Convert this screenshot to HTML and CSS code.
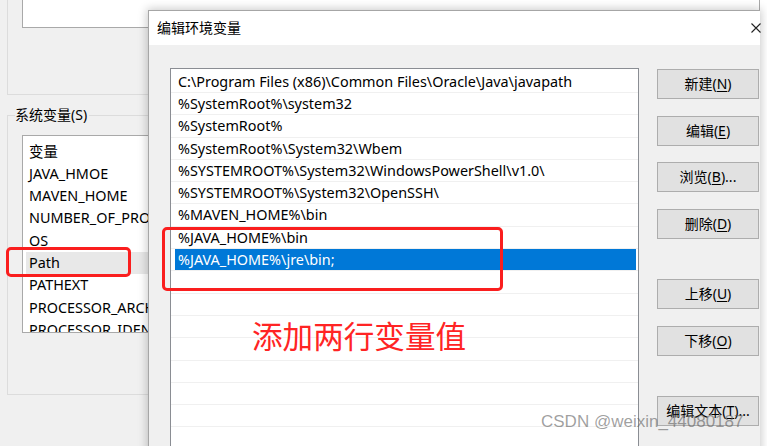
FILE: index.html
```html
<!DOCTYPE html>
<html lang="zh-CN">
<head>
<meta charset="utf-8">
<title>编辑环境变量</title>
<link rel="stylesheet" href="styles.css">
</head>
<body>
<div class="screen">
  <div class="bgwin">
    <div class="user-group"><div class="user-list"></div></div>
    <fieldset class="sys-group">
      <legend>系统变量(S)</legend>
      <div class="sys-list">
        <div class="sys-row">变量</div>
        <div class="sys-row">JAVA_HMOE</div>
        <div class="sys-row">MAVEN_HOME</div>
        <div class="sys-row">NUMBER_OF_PROCESSORS</div>
        <div class="sys-row">OS</div>
        <div class="sys-row hl">Path</div>
        <div class="sys-row">PATHEXT</div>
        <div class="sys-row">PROCESSOR_ARCHITECTURE</div>
        <div class="sys-row">PROCESSOR_IDENTIFIER</div>
      </div>
    </fieldset>
  </div>

  <div class="dialog">
    <div class="titlebar">
      <span class="title">编辑环境变量</span>
      <svg class="close" width="10" height="10" viewBox="0 0 10 10"><path d="M0.5 0.5 L9.5 9.5 M9.5 0.5 L0.5 9.5" stroke="#222" stroke-width="1.1" fill="none"/></svg>
    </div>
    <div class="dlg-body">
      <div class="path-list">
        <div class="prow"><div class="t">C:\Program Files (x86)\Common Files\Oracle\Java\javapath</div></div>
        <div class="prow"><div class="t">%SystemRoot%\system32</div></div>
        <div class="prow"><div class="t">%SystemRoot%</div></div>
        <div class="prow"><div class="t">%SystemRoot%\System32\Wbem</div></div>
        <div class="prow"><div class="t">%SYSTEMROOT%\System32\WindowsPowerShell\v1.0\</div></div>
        <div class="prow"><div class="t">%SYSTEMROOT%\System32\OpenSSH\</div></div>
        <div class="prow"><div class="t">%MAVEN_HOME%\bin</div></div>
        <div class="prow"><div class="t">%JAVA_HOME%\bin</div></div>
        <div class="prow sel"><div class="t">%JAVA_HOME%\jre\bin;</div></div>
        <div class="prow"><div class="t"></div></div>
        <div class="prow"><div class="t"></div></div>
        <div class="prow"><div class="t"></div></div>
        <div class="prow"><div class="t"></div></div>
        <div class="prow"><div class="t"></div></div>
        <div class="prow"><div class="t"></div></div>
        <div class="prow"><div class="t"></div></div>
        <div class="prow"><div class="t"></div></div>
      </div>
      <div class="btns">
        <div class="btn">新建(<u>N</u>)</div>
        <div class="btn">编辑(<u>E</u>)</div>
        <div class="btn">浏览(<u>B</u>)...</div>
        <div class="btn">删除(<u>D</u>)</div>
        <div class="btn far">上移(<u>U</u>)</div>
        <div class="btn">下移(<u>O</u>)</div>
        <div class="btn far">编辑文本(<u>T</u>)...</div>
      </div>
    </div>
  </div>

  <div class="mark mark-java"></div>
  <div class="mark mark-path"></div>
  <div class="note">添加两行变量值</div>
  <div class="wm">CSDN @weixin_44080187</div>
</div>
</body>
</html>
```

FILE: styles.css
```css
html, body {
  margin: 0;
  padding: 0;
  background: #ffffff;
}
body {
  font-family: "Noto Sans", "Noto Sans CJK SC", sans-serif;
  color: #000;
  overflow: hidden;
}
.screen {
  position: relative;
  width: 767px;
  height: 446px;
  overflow: hidden;
}
.bgwin {
  width: 760px;
  height: 446px;
  background: #f0f0f0;
  overflow: hidden;
}
.user-group {
  margin-left: 7px;
  height: 95px;
  box-sizing: border-box;
  border-left: 1px solid #dcdcdc;
  border-bottom: 1px solid #dcdcdc;
  padding-left: 14px;
}
.user-list {
  height: 28px;
  box-sizing: border-box;
  background: #fff;
  border: 1px solid #a9a9a9;
  border-top: none;
}
.sys-group {
  margin: 10px 0 0 7px;
  border: 1px solid #dcdcdc;
  border-right: none;
  padding: 10px 0 61px 14px;
  min-width: 0;
}
.sys-group legend {
  margin-left: -7px;
  padding: 0 2px 0 0;
  font-size: 14px;
  line-height: 20px;
  font-family: "Noto Sans", "Noto Sans CJK SC", sans-serif;
}
.sys-list {
  width: 400px;
  height: 198px;
  box-sizing: border-box;
  background: #fff;
  border: 1px solid #a9a9a9;
  padding-top: 4.5px;
  overflow: hidden;
}
.sys-row {
  height: 22.3px;
  line-height: 22.3px;
  padding-left: 6px;
  font-size: 14.4px;
  white-space: nowrap;
}
.sys-row.hl {
  margin-left: 3px;
  padding-left: 3px;
  background: #e8e8e8;
}

.dialog {
  position: absolute;
  left: 148px;
  top: 10px;
  width: 612px;
  height: 450px;
  box-sizing: border-box;
  background: #f0f0f0;
  border: 1px solid #a6a6a6;
  border-right: none;
  box-shadow: 0 0 9px 1px rgba(0, 0, 0, 0.22);
}
.titlebar {
  height: 34px;
  background: #fff;
  display: flex;
  align-items: center;
  justify-content: space-between;
  padding: 0 0 0 8px;
}
.title {
  font-size: 14px;
  line-height: 20px;
}
.close {
  display: block;
  margin-right: -1px;
}
.dlg-body {
  display: flex;
  align-items: flex-start;
  gap: 18px;
  padding: 23px 0 0 21px;
}
.path-list {
  width: 469px;
  height: 400px;
  flex: none;
  box-sizing: border-box;
  background: #fff;
  border: 1px solid #8a8d93;
  padding-top: 1.7px;
  overflow: hidden;
}
.prow {
  height: 22.3px;
  box-sizing: border-box;
  border-bottom: 1px solid #f0f0f0;
  padding: 0 2px 0 4px;
}
.prow .t {
  height: 100%;
  padding-left: 3px;
  font-size: 14.4px;
  line-height: 21.3px;
  white-space: nowrap;
}
.prow.sel .t {
  background: #0078d7;
  color: #fff;
}
.btns {
  display: flex;
  flex-direction: column;
  gap: 16.7px;
  padding-top: 1px;
}
.btn {
  width: 102px;
  height: 30px;
  box-sizing: border-box;
  background: #e1e1e1;
  border: 1px solid #adadad;
  font-size: 14px;
  line-height: 28px;
  text-align: center;
  white-space: nowrap;
}
.btn u {
  text-underline-offset: 2px;
}
.btn.far {
  margin-top: 23.3px;
}

.mark {
  position: absolute;
  box-sizing: border-box;
  border: 3px solid #fa1e1e;
  border-radius: 5px;
}
.mark-java {
  left: 162px;
  top: 227px;
  width: 341px;
  height: 64px;
}
.mark-path {
  left: 6px;
  top: 247px;
  width: 125px;
  height: 30px;
}
.note {
  position: absolute;
  left: 252px;
  top: 316px;
  font-family: "Noto Sans CJK SC", sans-serif;
  font-size: 30.6px;
  line-height: 38px;
  color: #ff2424;
  white-space: nowrap;
}
.wm {
  position: absolute;
  left: 541px;
  top: 412px;
  font-family: "Liberation Sans", Arial, sans-serif;
  font-size: 17px;
  line-height: 20px;
  color: rgba(95, 95, 95, 0.6);
  white-space: nowrap;
}
```
